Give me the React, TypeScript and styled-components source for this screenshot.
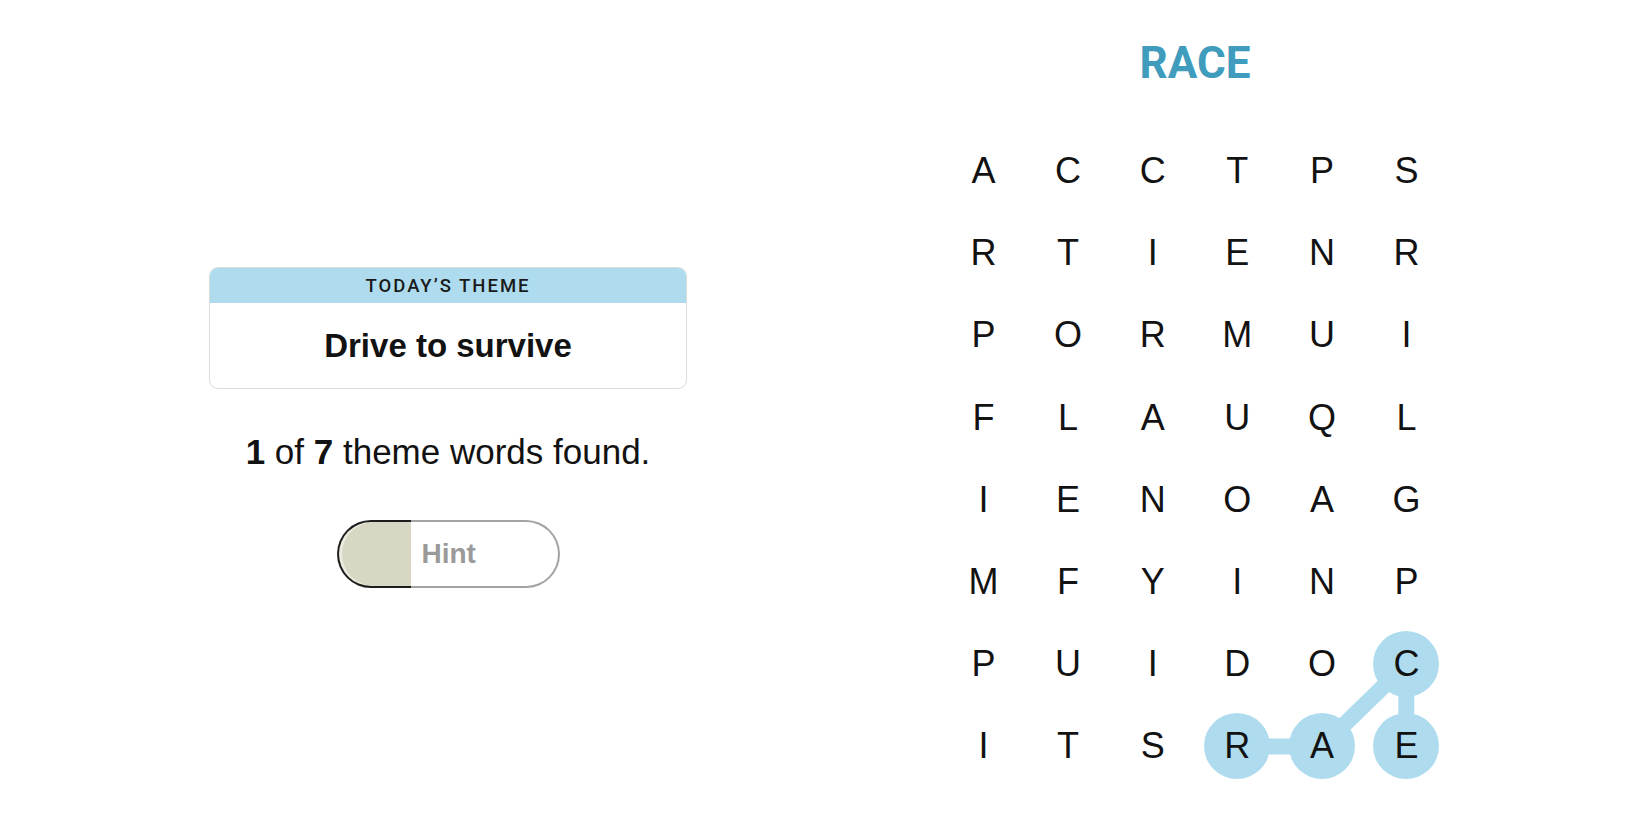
import styled, { createGlobalStyle } from "styled-components";

const GlobalStyle = createGlobalStyle`
  html, body {
    margin: 0;
    padding: 0;
    background: #ffffff;
  }
  body {
    font-family: "Liberation Sans", Arial, sans-serif;
    color: #121212;
  }
`;

const GRID = [
  "ACCTPS",
  "RTIENR",
  "PORMUI",
  "FLAUQL",
  "IENOAG",
  "MFYINP",
  "PUIDOC",
  "ITSRAE",
];

// cells of the current word, in tap order: [row, col]
const PATH: [number, number][] = [
  [7, 3],
  [7, 4],
  [6, 5],
  [7, 5],
];

const CELL_W = 84.6;
const CELL_H = 82.2;

const HIGHLIGHT = "#aedcee";

export default function App(): JSX.Element {
  const isSelected = (r: number, c: number) =>
    PATH.some(([pr, pc]) => pr === r && pc === c);

  const points = PATH.map(
    ([r, c]) => `${c * CELL_W + CELL_W / 2},${r * CELL_H + CELL_H / 2}`
  ).join(" ");

  return (
    <StyledPage>
      <GlobalStyle />
      <StyledLeft>
        <StyledThemeCard>
          <StyledThemeLabel>Today’s Theme</StyledThemeLabel>
          <StyledThemeBody>Drive to survive</StyledThemeBody>
        </StyledThemeCard>
        <StyledProgress>
          <b>1</b> of <b>7</b> theme words found.
        </StyledProgress>
        <StyledHintButton aria-label="Hint">
          <StyledHintFill />
          <StyledHintLabel>Hint</StyledHintLabel>
        </StyledHintButton>
      </StyledLeft>
      <StyledRight>
        <StyledWord>RACE</StyledWord>
        <StyledBoard>
          <StyledLines width={CELL_W * 6} height={CELL_H * 8}>
            <polyline
              points={points}
              fill="none"
              stroke={HIGHLIGHT}
              strokeWidth={16}
              strokeLinejoin="round"
            />
          </StyledLines>
          {GRID.map((row, r) =>
            row.split("").map((letter, c) => (
              <StyledCell key={`${r}-${c}`}>
                <StyledLetter $selected={isSelected(r, c)}>{letter}</StyledLetter>
              </StyledCell>
            ))
          )}
        </StyledBoard>
      </StyledRight>
    </StyledPage>
  );
}

const StyledPage = styled.div`
  display: flex;
  width: 1650px;
  height: 825px;
  overflow: hidden;
`;

const StyledLeft = styled.section`
  width: 896px;
  display: flex;
  flex-direction: column;
  align-items: center;
  padding-top: 267px;
  box-sizing: border-box;
`;

const StyledThemeCard = styled.div`
  width: 478px;
  border: 1px solid #dcdcdc;
  border-radius: 9px;
  overflow: hidden;
  box-sizing: border-box;
`;

const StyledThemeLabel = styled.div`
  height: 35px;
  background: ${HIGHLIGHT};
  display: flex;
  align-items: center;
  justify-content: center;
  font-family: Roboto, "Liberation Sans", sans-serif;
  font-size: 18.5px;
  font-weight: 500;
  letter-spacing: 2px;
  text-transform: uppercase;
  color: #1a1a1a;
`;

const StyledThemeBody = styled.div`
  height: 85px;
  display: flex;
  align-items: center;
  justify-content: center;
  font-size: 33px;
  font-weight: 700;
  color: #121212;
`;

const StyledProgress = styled.p`
  margin: 43px 0 0;
  font-size: 35px;
  line-height: 40px;
  color: #121212;
  b {
    font-weight: 700;
  }
`;

const StyledHintButton = styled.button`
  margin-top: 48px;
  width: 223px;
  height: 68px;
  display: flex;
  padding: 0;
  border: none;
  background: transparent;
  cursor: pointer;
`;

const StyledHintFill = styled.span`
  width: 74px;
  height: 100%;
  box-sizing: border-box;
  border: 2px solid #1e1e1e;
  border-right: none;
  border-radius: 34px 0 0 34px;
  background: #d8d7c4;
  box-shadow: inset 3px 0 0 #ecebe0;
`;

const StyledHintLabel = styled.span`
  flex: 1;
  height: 100%;
  box-sizing: border-box;
  border: 2px solid #a3a3a3;
  border-left: none;
  border-radius: 0 34px 34px 0;
  display: flex;
  align-items: center;
  padding-left: 11px;
  font-family: "Liberation Sans", Arial, sans-serif;
  font-size: 28px;
  font-weight: 700;
  color: #9a9a9a;
`;

const StyledRight = styled.section`
  width: 598px;
  display: flex;
  flex-direction: column;
  align-items: center;
  padding-top: 35px;
  box-sizing: border-box;
`;

const StyledWord = styled.h1`
  margin: 0;
  font-family: Roboto, "Liberation Sans", sans-serif;
  font-size: 44px;
  line-height: 56px;
  font-weight: 700;
  color: #409cbd;
`;

const StyledBoard = styled.div`
  position: relative;
  margin-top: 39px;
  display: grid;
  grid-template-columns: repeat(6, ${CELL_W}px);
  grid-template-rows: repeat(8, ${CELL_H}px);
`;

const StyledLines = styled.svg`
  position: absolute;
  inset: 0;
  z-index: 0;
`;

const StyledCell = styled.div`
  position: relative;
  z-index: 1;
  display: flex;
  align-items: center;
  justify-content: center;
`;

const StyledLetter = styled.span<{ $selected: boolean }>`
  width: 66px;
  height: 66px;
  border-radius: 50%;
  display: flex;
  align-items: center;
  justify-content: center;
  font-size: 36px;
  color: #121212;
  background: ${(p) => (p.$selected ? HIGHLIGHT : "transparent")};
`;
